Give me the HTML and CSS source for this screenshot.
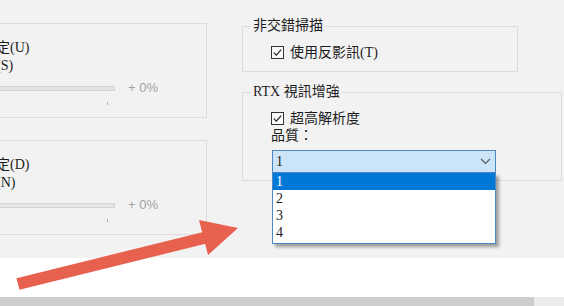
FILE: index.html
```html
<!DOCTYPE html>
<html lang="zh-Hant">
<head>
<meta charset="utf-8">
<title>RTX 視訊增強</title>
<link rel="stylesheet" href="styles.css">
</head>
<body>
<div class="page">
  <div class="main">
    <div class="left">
      <div class="box">
        <div class="label">使用視訊播放器設定(U)</div>
        <div class="label">使用 NVIDIA 設定(S)</div>
        <div class="slider-row"><div class="track"></div><span class="value">+ 0%</span></div>
        <div class="tick"></div>
      </div>
      <div class="box">
        <div class="label">使用視訊播放器設定(D)</div>
        <div class="label">使用 NVIDIA 設定(N)</div>
        <div class="slider-row"><div class="track"></div><span class="value">+ 0%</span></div>
        <div class="tick"></div>
      </div>
    </div>
    <div class="right">
      <fieldset class="group g1">
        <legend>非交錯掃描</legend>
        <label class="check">
          <svg class="cb" width="13" height="13" viewBox="0 0 13 13"><rect x="0.5" y="0.5" width="12" height="12" fill="#fafafa" stroke="#333"/><path d="M2.8 6.6 L5.3 9.1 L10.2 3.6" fill="none" stroke="#222" stroke-width="1.2"/></svg>
          <span>使用反影訊(T)</span>
        </label>
      </fieldset>
      <fieldset class="group g2">
        <legend>RTX 視訊增強</legend>
        <label class="check">
          <svg class="cb" width="13" height="13" viewBox="0 0 13 13"><rect x="0.5" y="0.5" width="12" height="12" fill="#fafafa" stroke="#333"/><path d="M2.8 6.6 L5.3 9.1 L10.2 3.6" fill="none" stroke="#222" stroke-width="1.2"/></svg>
          <span>超高解析度</span>
        </label>
        <div class="field-label">品質：</div>
        <div class="combo-wrap">
          <div class="combo">
            <span>1</span>
            <svg width="11" height="7" viewBox="0 0 11 7"><path d="M1 1 L5.5 5.5 L10 1" fill="none" stroke="#555" stroke-width="1.1"/></svg>
          </div>
          <ul class="dropdown">
            <li class="selected">1</li>
            <li>2</li>
            <li>3</li>
            <li>4</li>
          </ul>
        </div>
      </fieldset>
    </div>
  </div>
  <div class="footer"></div>
  <div class="bar"><div class="bar-fill"></div></div>
  <svg class="arrow" width="564" height="306" viewBox="0 0 564 306">
    <polygon points="16.5,278.2 210.5,230.2 213.5,241.8 19.5,289.8" fill="#e8604e"/>
    <polygon points="199,220 238,228 208,255" fill="#e8604e"/>
  </svg>
</div>
</body>
</html>
```
FILE: styles.css
```css
html, body {
  margin: 0;
  padding: 0;
}
body {
  width: 564px;
  height: 306px;
  overflow: hidden;
  background: #ffffff;
  font-family: "Liberation Serif", "Noto Sans CJK TC", serif;
  font-size: 14px;
  color: #1c1c1c;
}
.page {
  position: relative;
  width: 564px;
  height: 306px;
  overflow: hidden;
}
.main {
  display: flex;
  height: 258px;
  background: #f2f2f2;
}
.left {
  flex: none;
  width: 337px;
  margin-left: -130px;
  padding-top: 23px;
  display: flex;
  flex-direction: column;
  gap: 22px;
}
.box {
  border: 1px solid #dcdcdc;
  padding: 15px 0 11px 13px;
  height: 67px;
}
.label {
  line-height: 18px;
  white-space: nowrap;
}
.slider-row {
  display: flex;
  align-items: center;
  margin-top: 5px;
  height: 16px;
}
.track {
  width: 229px;
  height: 3px;
  border: 1px solid #d4d4d4;
  background: #e4e4e4;
}
.value {
  margin-left: 13px;
  font-family: "Liberation Sans", sans-serif;
  font-size: 13px;
  color: #a2a2a2;
  line-height: 16px;
}
.tick {
  margin-top: 6px;
  margin-left: 223px;
  width: 1px;
  height: 3px;
  background: #b0b0b0;
}
.right {
  flex: none;
  margin-left: 35px;
  padding-top: 17px;
  display: flex;
  flex-direction: column;
  align-items: flex-start;
}
.group {
  margin: 0;
  border: 1px solid #dcdcdc;
  padding: 9px 0 10px 8px;
  min-width: 0;
  box-sizing: border-box;
}
.group legend {
  padding: 0 2px;
  line-height: 18px;
  font-size: 14px;
}
.g1 {
  width: 276px;
}
.g2 {
  width: 320px;
  margin-top: 11px;
  padding-bottom: 7px;
}
.check {
  display: flex;
  align-items: center;
  margin-left: 20px;
  line-height: 17px;
  gap: 6px;
}
.cb {
  flex: none;
}
.field-label {
  margin-left: 20px;
  line-height: 17px;
}
.combo-wrap {
  position: relative;
  margin-left: 21px;
  margin-top: 6px;
  width: 224px;
}
.combo {
  box-sizing: border-box;
  height: 23px;
  border: 1px solid #4f87c6;
  background: #cce4f7;
  display: flex;
  align-items: center;
  justify-content: space-between;
  padding: 0 4px 0 3px;
}
.dropdown {
  position: absolute;
  left: 0;
  top: 23px;
  width: 224px;
  box-sizing: border-box;
  margin: 0;
  padding: 0 0 2px 0;
  list-style: none;
  background: #ffffff;
  border: 1px solid #4f87c6;
  border-top: none;
  box-shadow: 3px 3px 3px rgba(0, 0, 0, 0.35);
  z-index: 2;
}
.dropdown li {
  height: 17px;
  line-height: 17px;
  padding-left: 3px;
}
.dropdown li.selected {
  background: #0078d7;
  color: #ffffff;
}
.footer {
  height: 39px;
  background: #ffffff;
}
.bar {
  height: 9px;
  background: #ececec;
}
.bar-fill {
  width: 534px;
  height: 9px;
  background: #cdcdcd;
}
.arrow {
  position: absolute;
  left: 0;
  top: 0;
  pointer-events: none;
  z-index: 3;
}
```
